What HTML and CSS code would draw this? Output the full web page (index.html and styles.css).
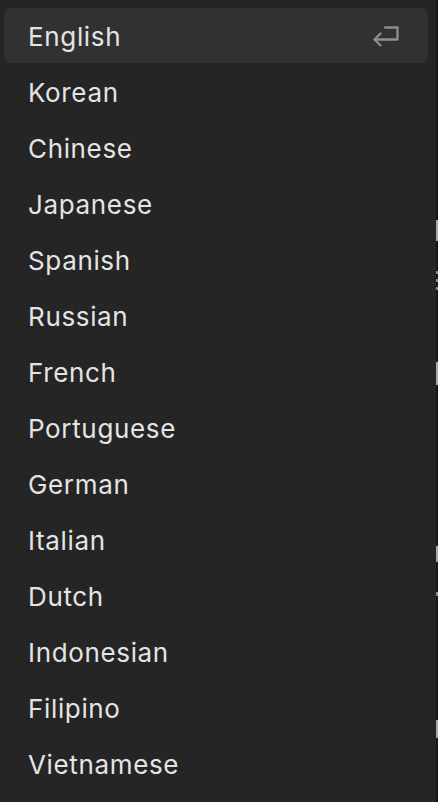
FILE: index.html
```html
<!DOCTYPE html>
<html lang="en">
<head>
<meta charset="utf-8">
<link rel="stylesheet" href="styles.css">
</head>
<body>
<div class="screen">
  <div class="panel">
    <ul class="list">
      <li class="item active"><span class="label">English</span>
        <svg class="enter" width="28" height="24" viewBox="0 0 28 24" fill="none" stroke="currentColor" stroke-width="2.3" stroke-linecap="round" stroke-linejoin="round">
          <path d="M13 2.5 H25.5 V14.5 H2.5"/>
          <path d="M8.5 8.5 L2.5 14.5 L8.5 20.5"/>
        </svg>
      </li>
      <li class="item"><span class="label">Korean</span></li>
      <li class="item"><span class="label">Chinese</span></li>
      <li class="item"><span class="label">Japanese</span></li>
      <li class="item"><span class="label">Spanish</span></li>
      <li class="item"><span class="label">Russian</span></li>
      <li class="item"><span class="label">French</span></li>
      <li class="item"><span class="label">Portuguese</span></li>
      <li class="item"><span class="label">German</span></li>
      <li class="item"><span class="label">Italian</span></li>
      <li class="item"><span class="label">Dutch</span></li>
      <li class="item"><span class="label">Indonesian</span></li>
      <li class="item"><span class="label">Filipino</span></li>
      <li class="item"><span class="label">Vietnamese</span></li>
    </ul>
  </div>
  <div class="behind">
    <span class="frag f1"></span>
    <span class="frag f2"></span>
    <span class="frag f3"></span>
    <span class="frag f4"></span>
    <span class="frag f5"></span>
    <span class="frag f6"></span>
    <span class="frag f7"></span>
    <span class="frag f8"></span>
  </div>
</div>
</body>
</html>
```
FILE: styles.css
```css
* { box-sizing: border-box; }
html, body {
  margin: 0;
  padding: 0;
  width: 438px;
  height: 802px;
  overflow: hidden;
  background: #171717;
}
body {
  font-family: Inter, "Noto Sans", "Liberation Sans", sans-serif;
  -webkit-font-smoothing: antialiased;
}
.screen {
  display: flex;
  width: 438px;
  height: 802px;
}
.panel {
  width: 436px;
  height: 812px;
  background: #252525;
  border-radius: 0 0 12px 0;
  padding: 8px 8px 0 4px;
  flex-shrink: 0;
}
.list {
  list-style: none;
  margin: 0;
  padding: 0;
  display: flex;
  flex-direction: column;
  gap: 1px;
}
.item {
  height: 55px;
  display: flex;
  align-items: center;
  justify-content: space-between;
  padding: 2px 28px 0 24px;
  border-radius: 7px;
  color: #e4e4e4;
  font-size: 26px;
  font-weight: 400;
  letter-spacing: 0.65px;
}
.item.active {
  background: #313131;
}
.enter {
  color: #8e8e8e;
  display: block;
  margin-top: 0;
}
.behind {
  position: relative;
  flex: 1;
  height: 802px;
}
.frag {
  position: absolute;
  left: 0;
  width: 2px;
  background: #a9a9a9;
}
.f1 { top: 220px; height: 21px; }
.f2 { top: 271px; height: 3px; background: #8a8a8a; }
.f3 { top: 279px; height: 3px; background: #8a8a8a; }
.f4 { top: 287px; height: 3px; background: #8a8a8a; }
.f5 { top: 362px; height: 23px; }
.f6 { top: 546px; height: 16px; }
.f7 { top: 592px; height: 4px; background: #8a8a8a; }
.f8 { top: 720px; height: 18px; }
```
